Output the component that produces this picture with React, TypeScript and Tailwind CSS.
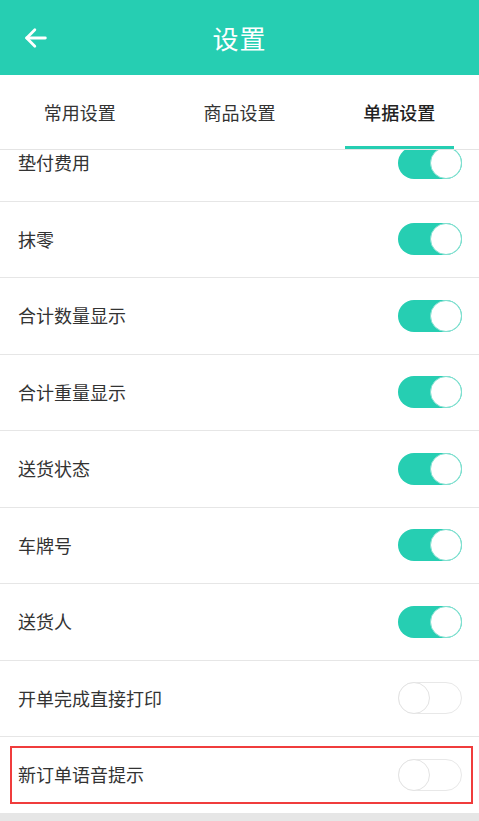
import React, { useState } from "react";

const font = "font-['Noto_Sans_CJK_SC','Noto_Sans',sans-serif]";

const rows = [
  { label: "垫付费用", on: true },
  { label: "抹零", on: true },
  { label: "合计数量显示", on: true },
  { label: "合计重量显示", on: true },
  { label: "送货状态", on: true },
  { label: "车牌号", on: true },
  { label: "送货人", on: true },
  { label: "开单完成直接打印", on: false },
  { label: "新订单语音提示", on: false, marked: true },
];

const Toggle = ({ on, onClick }: { on: boolean; onClick: () => void }) => (
  <button
    onClick={onClick}
    className={
      on
        ? "w-[64px] h-[32px] rounded-full bg-[#26ceb2] flex items-center justify-end shrink-0"
        : "w-[64px] h-[32px] rounded-full bg-white border border-[#e8e8e8] flex items-center justify-start shrink-0"
    }
  >
    <span
      className={
        on
          ? "w-[32px] h-[32px] rounded-full bg-white border border-[#7fdfcf]"
          : "w-[32px] h-[32px] -ml-px rounded-full bg-white border border-[#e3e3e3]"
      }
    />
  </button>
);

export default function App() {
  const [tab, setTab] = useState(2);
  const [items, setItems] = useState(rows);
  const tabs = ["常用设置", "商品设置", "单据设置"];

  return (
    <div className={`w-[479px] h-[821px] bg-[#e6e6e6] flex flex-col overflow-hidden ${font}`}>
      <header className="h-[75px] bg-[#26ceb2] flex items-center px-[22px] shrink-0">
        <svg width="28" height="28" viewBox="0 0 24 24" fill="none" stroke="white" strokeWidth="2.4" strokeLinecap="round" strokeLinejoin="round">
          <path d="M20 12H4" />
          <path d="M11 5l-7 7 7 7" />
        </svg>
        <h1 className="flex-1 text-center text-white text-[26px] -ml-[28px] tracking-[1px]">设置</h1>
      </header>

      <nav className="h-[75px] bg-white grid grid-cols-3 border-b border-[#e4e4e4] shrink-0">
        {tabs.map((t, i) => (
          <button key={t} onClick={() => setTab(i)} className="flex flex-col items-center">
            <span className={i === tab ? "flex-1 flex items-center pt-[3px] text-[18px] text-[#222] font-medium" : "flex-1 flex items-center pt-[3px] text-[18px] text-[#333]"}>
              {t}
            </span>
            <span className={i === tab ? "w-[109px] h-[3px] bg-[#26ceb2]" : "w-[109px] h-[3px]"} />
          </button>
        ))}
      </nav>

      <div className="flex-1 overflow-hidden">
        <div className="-mt-[25px]">
          {items.map((r, i) => (
            <div
              key={r.label}
              className={
                r.marked
                  ? "bg-white pl-[10px] pr-[6px] h-[76.5px] border-b border-[#e6e6e6] flex items-center"
                  : "bg-white px-[10px] h-[76.5px] border-b border-[#e6e6e6] flex items-center"
              }
            >
              <div className={r.marked ? "flex-1 h-[58px] border-2 border-[#f03c3c] flex items-center pl-[6px] pr-[9px]" : "flex-1 flex items-center pl-[8px] pr-[7px]"}>
                <span className="flex-1 text-[18px] text-[#333]">{r.label}</span>
                <Toggle
                  on={r.on}
                  onClick={() => setItems(items.map((x, j) => (j === i ? { ...x, on: !x.on } : x)))}
                />
              </div>
            </div>
          ))}
        </div>
      </div>
    </div>
  );
}
